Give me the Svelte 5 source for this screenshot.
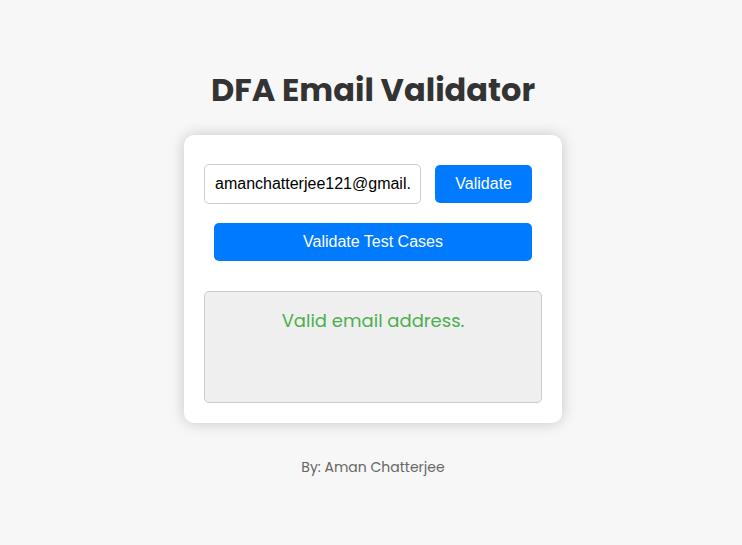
<script>
  let email = $state('amanchatterjee121@gmail.com');
  let message = $state('Valid email address.');

  function validate() {
    const valid = /^[a-z0-9._]+@[a-z0-9]+(\.[a-z]+)+$/i.test(email);
    message = valid ? 'Valid email address.' : 'Invalid email address.';
  }
</script>

<main>
  <h1>DFA Email Validator</h1>
  <section class="card">
    <div class="row">
      <input type="text" aria-label="Email address" bind:value={email} />
      <button type="button" onclick={validate}>Validate</button>
    </div>
    <button type="button" class="wide">Validate Test Cases</button>
    <output>{message}</output>
  </section>
  <footer>By: Aman Chatterjee</footer>
</main>

<style>
  :global(body) {
    margin: 0;
    background: #f7f7f7;
  }

  main {
    min-height: 100vh;
    box-sizing: border-box;
    padding: 0 16px 0 20px;
    display: flex;
    flex-direction: column;
    align-items: center;
    justify-content: center;
    font-family: Poppins, Inter, 'Open Sans', sans-serif;
  }

  h1 {
    margin: 0 0 22px;
    color: #333;
    font-size: 32px;
    line-height: 46px;
    font-weight: 700;
    text-align: center;
  }

  .card {
    width: 100%;
    max-width: 378px;
    box-sizing: border-box;
    padding: 29px 20px 20px;
    display: flex;
    flex-direction: column;
    border-radius: 10px;
    background: #fff;
    box-shadow: 0 0 15px rgba(0, 0, 0, 0.2);
  }

  .row {
    display: flex;
    align-items: center;
    gap: 14px;
    margin-right: 10px;
  }

  input {
    flex: 1;
    min-width: 0;
    height: 40px;
    box-sizing: border-box;
    padding: 0 10px;
    border: 1px solid #ccc;
    border-radius: 5px;
    font: 16px 'Liberation Sans', Arial, sans-serif;
    color: #000;
    background: #fff;
  }

  button {
    padding: 10px 20px;
    border: 0;
    border-radius: 5px;
    background: #007bff;
    color: #fff;
    font: 16px/18px 'Liberation Sans', Arial, sans-serif;
    cursor: pointer;
  }

  .wide {
    margin: 19px 10px 30px;
  }

  output {
    min-height: 112px;
    box-sizing: border-box;
    padding: 15px 20px;
    border: 1px solid #ccc;
    border-radius: 5px;
    background: #efefef;
    color: #4caf50;
    font-size: 18px;
    line-height: 28px;
    text-align: center;
  }

  footer {
    margin-top: 32px;
    color: #666;
    font-size: 14px;
    line-height: 24px;
  }
</style>
